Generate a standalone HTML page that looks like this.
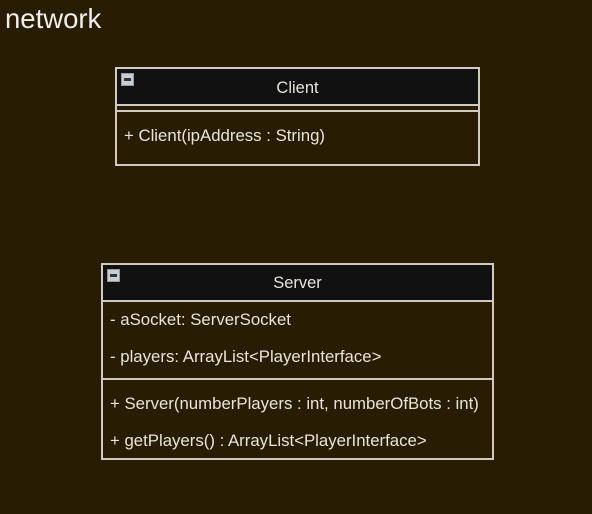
<!DOCTYPE html>
<html><head><style>
body{margin:0;width:592px;height:514px;background:#281d03;font-family:"Liberation Sans",sans-serif;color:#e8e4dc;position:relative;overflow:hidden}
.a{position:absolute}
.box{position:absolute;border:2px solid #cfcbc3;box-sizing:border-box}
.hd{position:absolute;left:0;right:0;top:0;background:#111;text-align:center;font-size:16.5px}
.ln{position:absolute;left:0;right:0;height:2px;background:#cfcbc3}
.t{position:absolute;font-size:16.8px;white-space:nowrap}
.ic{position:absolute;width:13px;height:13px;background:#c8ccd4;border:1px solid #999;box-sizing:border-box}
.ic:after{content:"";position:absolute;left:2px;top:4px;width:7px;height:3px;background:#333}
</style></head><body>
<div class="a" style="left:5px;top:3px;font-size:27.5px;color:#eee">network</div>

<div class="box" style="left:115px;top:67px;width:365px;height:99px">
 <div class="hd" style="height:35px;line-height:38px">Client</div>
 <div class="ic" style="left:4px;top:4px"></div>
 <div class="ln" style="top:35px"></div>
 <div class="ln" style="top:41px"></div>
 <div class="t" style="left:7px;top:57px">+ Client(ipAddress : String)</div>
</div>

<div class="box" style="left:101px;top:263px;width:393px;height:197px">
 <div class="hd" style="height:35px;line-height:37px">Server</div>
 <div class="ic" style="left:4px;top:4px"></div>
 <div class="ln" style="top:35px"></div>
 <div class="t" style="left:7px;top:45px">- aSocket: ServerSocket</div>
 <div class="t" style="left:7px;top:82px">- players: ArrayList&lt;PlayerInterface&gt;</div>
 <div class="ln" style="top:113px"></div>
 <div class="t" style="left:7px;top:129px">+ Server(numberPlayers : int, numberOfBots : int)</div>
 <div class="t" style="left:7px;top:166px">+ getPlayers() : ArrayList&lt;PlayerInterface&gt;</div>
</div>
</body></html>
